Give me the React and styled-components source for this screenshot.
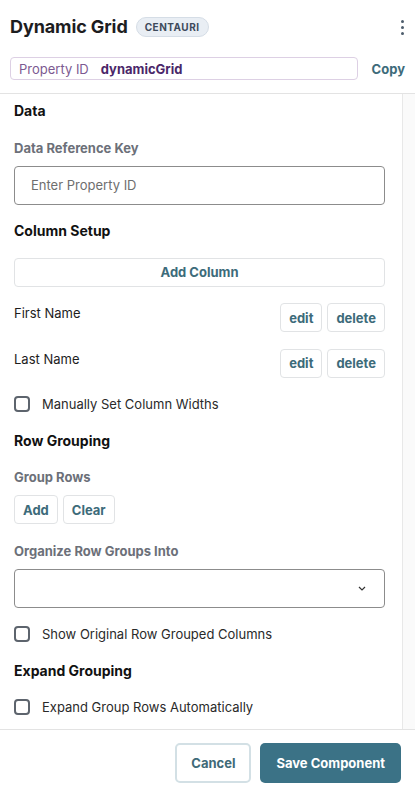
import React from "react";
import styled, { createGlobalStyle } from "styled-components";

const Global = createGlobalStyle`
  html, body { margin: 0; padding: 0; background: #fff; }
  body { font-family: Inter, "Noto Sans", sans-serif; color: #1c1c1c; }
  * { box-sizing: border-box; }
`;

const Page = styled.div`
  width: 415px;
  height: 792px;
  display: flex;
  flex-direction: column;
  background: #fff;
`;

const Header = styled.div`
  padding: 15px 10px 13px 10px;
  border-bottom: 1px solid #e3e3e3;
  display: flex;
  flex-direction: column;
  gap: 18px;
`;

const TitleRow = styled.div`
  display: flex;
  align-items: center;
  height: 24px;
`;

const Title = styled.h1`
  margin: 0;
  font-size: 18px;
  line-height: 24px;
  font-weight: 700;
  color: #1d1d1f;
  letter-spacing: -0.1px;
`;

const Badge = styled.span`
  margin-left: 8px;
  height: 20px;
  padding: 0 8px;
  border-radius: 10px;
  background: #e9eef4;
  border: 1px solid #d5dde6;
  color: #3e4a5b;
  font-size: 10px;
  font-weight: 700;
  letter-spacing: 0.5px;
  display: inline-flex;
  align-items: center;
`;

const Kebab = styled.button`
  margin-left: auto;
  margin-right: -3px;
  border: 0;
  background: none;
  padding: 0 4px;
  display: flex;
  flex-direction: column;
  gap: 3px;
  align-items: center;
  cursor: pointer;
`;

const Dot = styled.span`
  width: 3px;
  height: 3px;
  border-radius: 50%;
  background: #4d5d6c;
`;

const PropRow = styled.div`
  display: flex;
  align-items: center;
  gap: 14px;
`;

const PropBox = styled.div`
  flex: 1;
  height: 23px;
  border: 1px solid #ddd0e4;
  border-radius: 4px;
  display: flex;
  align-items: center;
  padding: 0 8px;
  font-size: 13px;
`;

const PropLabel = styled.span`
  color: #7c5a91;
`;

const PropValue = styled.span`
  margin-left: 12px;
  color: #4a2769;
  font-weight: 700;
`;

const LinkButton = styled.button`
  border: 0;
  background: none;
  padding: 0;
  font-family: inherit;
  font-size: 13px;
  font-weight: 700;
  color: #3d6b7a;
  cursor: pointer;
`;

const Body = styled.div`
  flex: 1;
  display: flex;
  min-height: 0;
  border-bottom: 1px solid #e3e3e3;
`;

const Content = styled.div`
  flex: 1;
  padding: 7px 17px 0 14px;
  display: flex;
  flex-direction: column;
  gap: 16.5px;
  overflow: hidden;
`;

const Track = styled.div`
  width: 13px;
  border-left: 1px solid #e8e8e8;
  background: #fafafa;
`;

const SectionTitle = styled.div`
  font-size: 14px;
  line-height: 20px;
  font-weight: 700;
  color: #111;
`;

const Field = styled.div`
  display: flex;
  flex-direction: column;
  gap: 8px;
`;

const Label = styled.div`
  font-size: 13px;
  line-height: 20px;
  font-weight: 700;
  color: #6c7079;
`;

const TextInput = styled.input`
  height: 39px;
  width: 100%;
  border: 1px solid #8c8c8c;
  border-radius: 4px;
  padding: 0 16px;
  font-family: inherit;
  font-size: 13px;
  color: #333;
  &::placeholder { color: #6e6e6e; }
`;

const SelectBox = styled.div`
  height: 39px;
  border: 1px solid #8c8c8c;
  border-radius: 4px;
  display: flex;
  align-items: center;
  justify-content: flex-end;
  padding-right: 18px;
`;

const Button = styled.button`
  height: 29px;
  padding: 0 ${(p) => (p.$wide ? "0" : "8px")};
  width: ${(p) => (p.$wide ? "100%" : "auto")};
  border: 1px solid #e1e3e5;
  border-radius: 4px;
  background: #fff;
  font-family: inherit;
  font-size: 13px;
  font-weight: 700;
  color: #3d6b7a;
  cursor: pointer;
`;

const ColumnRow = styled.div`
  display: flex;
  align-items: flex-start;
  justify-content: space-between;
`;

const ColumnName = styled.div`
  font-size: 13px;
  line-height: 20px;
  color: #1d1d1d;
`;

const ButtonGroup = styled.div`
  display: flex;
  gap: 5px;
`;

const CheckRow = styled.label`
  display: flex;
  align-items: center;
  gap: 12px;
  height: 20px;
  font-size: 13px;
  color: #2a2a2a;
`;

const Box = styled.span`
  width: 16px;
  height: 16px;
  border: 2px solid #5d646d;
  border-radius: 4px;
  flex: none;
`;

const Footer = styled.div`
  height: 62px;
  display: flex;
  justify-content: flex-end;
  align-items: center;
  gap: 9px;
  padding: 3px 14px 0 0;
`;

const FooterButton = styled.button`
  height: 40px;
  padding: 0 ${(p) => (p.$primary ? "16px" : "14px")};
  border-radius: 5px;
  font-family: inherit;
  font-size: 13px;
  font-weight: 700;
  cursor: pointer;
  border: ${(p) => (p.$primary ? "0" : "2px solid #d3e0e5")};
  background: ${(p) => (p.$primary ? "#3b7286" : "#fff")};
  color: ${(p) => (p.$primary ? "#fff" : "#3f6a78")};
`;

const Check = ({ children }) => (
  <CheckRow>
    <Box />
    {children}
  </CheckRow>
);

export default function App() {
  return (
    <Page>
      <Global />
      <Header>
        <TitleRow>
          <Title>Dynamic Grid</Title>
          <Badge>CENTAURI</Badge>
          <Kebab aria-label="more">
            <Dot />
            <Dot />
            <Dot />
          </Kebab>
        </TitleRow>
        <PropRow>
          <PropBox>
            <PropLabel>Property ID</PropLabel>
            <PropValue>dynamicGrid</PropValue>
          </PropBox>
          <LinkButton>Copy</LinkButton>
        </PropRow>
      </Header>
      <Body>
        <Content>
          <SectionTitle>Data</SectionTitle>
          <Field>
            <Label>Data Reference Key</Label>
            <TextInput placeholder="Enter Property ID" />
          </Field>
          <SectionTitle>Column Setup</SectionTitle>
          <Button $wide>Add Column</Button>
          {["First Name", "Last Name"].map((n) => (
            <ColumnRow key={n}>
              <ColumnName>{n}</ColumnName>
              <ButtonGroup>
                <Button>edit</Button>
                <Button>delete</Button>
              </ButtonGroup>
            </ColumnRow>
          ))}
          <Check>Manually Set Column Widths</Check>
          <SectionTitle>Row Grouping</SectionTitle>
          <Field>
            <Label>Group Rows</Label>
            <ButtonGroup>
              <Button>Add</Button>
              <Button>Clear</Button>
            </ButtonGroup>
          </Field>
          <Field>
            <Label>Organize Row Groups Into</Label>
            <SelectBox>
              <svg width="8" height="5" viewBox="0 0 8 5">
                <polyline points="1,1 4,4 7,1" fill="none" stroke="#333" strokeWidth="1.2" />
              </svg>
            </SelectBox>
          </Field>
          <Check>Show Original Row Grouped Columns</Check>
          <SectionTitle>Expand Grouping</SectionTitle>
          <Check>Expand Group Rows Automatically</Check>
        </Content>
        <Track />
      </Body>
      <Footer>
        <FooterButton>Cancel</FooterButton>
        <FooterButton $primary>Save Component</FooterButton>
      </Footer>
    </Page>
  );
}
